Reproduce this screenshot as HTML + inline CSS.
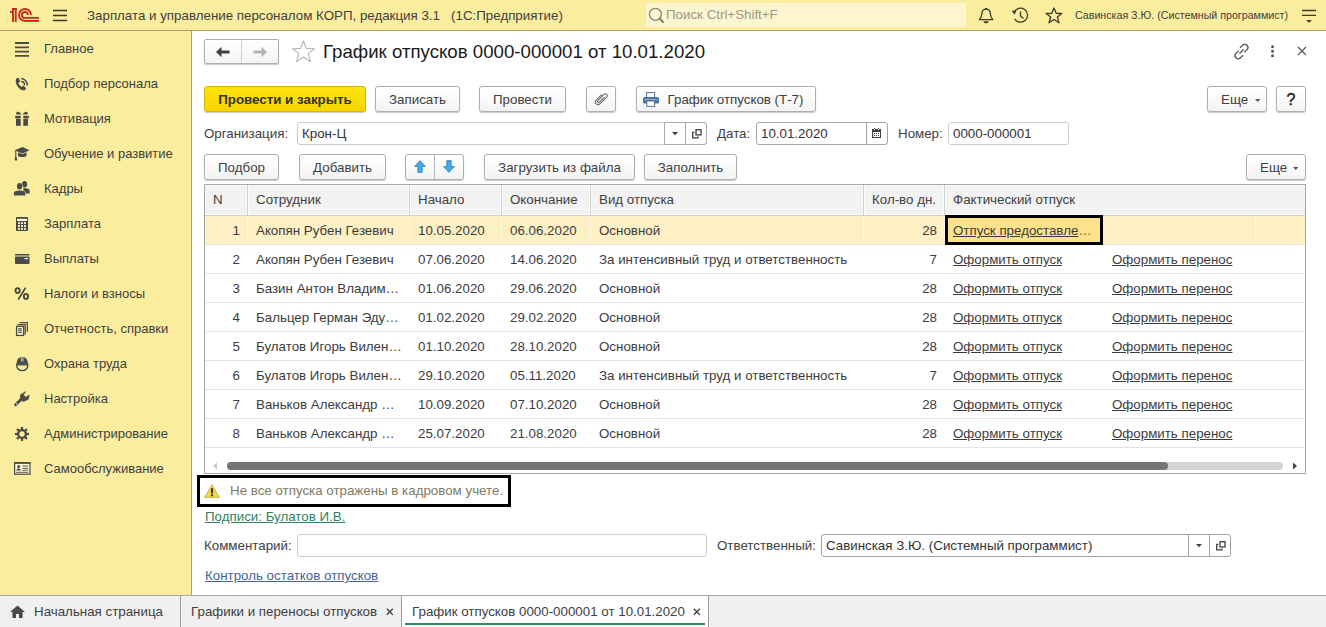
<!DOCTYPE html>
<html><head><meta charset="utf-8">
<style>
*{margin:0;padding:0;box-sizing:border-box}
html,body{width:1326px;height:627px;overflow:hidden;background:#fff}
body{font-family:"Liberation Sans",sans-serif;font-size:13.33px;color:#404040;position:relative}
.a{position:absolute;white-space:nowrap}
svg.a{overflow:visible}
.si{left:44px;color:#404040;font-size:13px}
.btn{position:absolute;height:26px;border:1px solid #aeaeae;border-radius:3px;background:linear-gradient(#ffffff,#f3f3f3);box-shadow:0 1px 1px rgba(0,0,0,.22);text-align:center;line-height:24px;padding-top:1px;color:#404040;white-space:nowrap}
.inp{position:absolute;height:23px;border:1px solid #cbcbcb;border-radius:3px;background:#fff;line-height:21px;padding-left:4px;color:#333;white-space:nowrap}
.th{top:185px;height:30px;line-height:30px;color:#404040}
.td{height:28px;line-height:29px;color:#3c3c3c}
.lnk{text-decoration:underline}
.lbl{color:#404040}

</style></head><body>
<!-- top bar -->
<div class="a" style="left:0;top:0;width:1326px;height:30px;background:#fbed9e"></div>
<div class="a" style="left:0;top:30px;width:1326px;height:1px;background:#ad9f6c"></div>
<!-- sidebar -->
<div class="a" style="left:0;top:31px;width:191px;height:564px;background:#fbed9e"></div>
<div class="a" style="left:191px;top:31px;width:1px;height:564px;background:#ad9f6c"></div>

<!-- 1C logo -->
<svg class="a" style="left:0;top:0" width="44" height="26" viewBox="0 0 44 26">
 <g fill="#c92a1c"><rect x="12" y="8" width="4.7" height="1.7"/><rect x="12" y="8" width="1.9" height="14"/><rect x="14.8" y="8" width="1.9" height="14"/><rect x="10" y="11" width="2.2" height="1.8"/></g>
 <g fill="none" stroke="#c92a1c" stroke-width="1.9">
  <path d="M25 20.95 A6 6 0 1 1 31 14.95"/><path d="M24.5 20.95H39"/>
  <path d="M24.9 17.85 A2.95 2.95 0 1 1 27.85 14.9"/><path d="M24.5 17.85H39"/>
 </g>
</svg>
<!-- hamburger -->
<svg class="a" style="left:53px;top:9px" width="15" height="13"><g stroke="#3d3a2a" stroke-width="1.3"><path d="M0 1.5H14M0 6.5H14M0 11.5H14"/></g></svg>
<div class="a" style="left:87px;top:8px;font-size:13.33px;color:#404040">Зарплата и управление персоналом КОРП, редакция 3.1&nbsp;&nbsp; (1С:Предприятие)</div>
<!-- search -->
<div class="a" style="left:646px;top:3px;width:320px;height:24px;background:#fdf5cf;border-radius:2px"></div>
<svg class="a" style="left:642px;top:4px" width="26" height="24" viewBox="0 0 26 24"><circle cx="13.4" cy="10.3" r="6" fill="none" stroke="#8a8672" stroke-width="1.3"/><path d="M17.6 14.6L21 18" stroke="#8a8672" stroke-width="2.2" stroke-linecap="round"/></svg>
<div class="a" style="left:666px;top:7px;font-size:13.33px;color:#9a9a8a">Поиск Ctrl+Shift+F</div>
<!-- bell -->
<svg class="a" style="left:972px;top:2px" width="26" height="26" viewBox="0 0 26 26"><circle cx="14.1" cy="6.7" r="1" fill="#3d3a2a"/><path d="M7.4 17.6 C9.2 16 9.7 13.8 9.9 11.2 C10.1 8.6 11.8 7.2 14.1 7.2 C16.4 7.2 18.1 8.6 18.3 11.2 C18.5 13.8 19 16 20.8 17.6 Z" fill="none" stroke="#3d3a2a" stroke-width="1.3" stroke-linejoin="round"/><path d="M11.4 19.2 H16.8 C16.2 20.8 15.2 21.3 14.1 21.3 C13 21.3 12 20.8 11.4 19.2Z" fill="#3d3a2a"/></svg>
<!-- history -->
<svg class="a" style="left:1011px;top:7px" width="18" height="17" viewBox="0 0 18 17"><path d="M3.2 5.2 A7 7 0 1 1 3.6 11.8" fill="none" stroke="#3d3a2a" stroke-width="1.3"/><path d="M0.8 3.8 L5.5 3.6 L3.5 7.8Z" fill="#3d3a2a"/><path d="M9.5 4.5V9L12.5 11.5" fill="none" stroke="#3d3a2a" stroke-width="1.3"/></svg>
<!-- star -->
<svg class="a" style="left:1045px;top:7px" width="18" height="17" viewBox="0 0 18 17"><path d="M9 1 L11.2 6.3 L16.8 6.5 L12.4 10 L14 15.8 L9 12.5 L4 15.8 L5.6 10 L1.2 6.5 L6.8 6.3Z" fill="none" stroke="#3d3a2a" stroke-width="1.3" stroke-linejoin="round"/></svg>
<div class="a" style="left:1075px;top:9px;font-size:10.67px;color:#404040">Савинская З.Ю. (Системный программист)</div>
<!-- menu -->
<svg class="a" style="left:1296px;top:4px" width="26" height="24" viewBox="0 0 26 24"><path d="M6 6.5H20M6 11.4H20" stroke="#3d3a2a" stroke-width="1.3"/><path d="M10.2 16.1H15.9L13.05 18.8Z" fill="#3d3a2a"/></svg>

<!-- sidebar items -->
<div class="a si" style="top:41px">Главное</div>
<div class="a si" style="top:76px">Подбор персонала</div>
<div class="a si" style="top:111px">Мотивация</div>
<div class="a si" style="top:146px">Обучение и развитие</div>
<div class="a si" style="top:181px">Кадры</div>
<div class="a si" style="top:216px">Зарплата</div>
<div class="a si" style="top:251px">Выплаты</div>
<div class="a si" style="top:286px">Налоги и взносы</div>
<div class="a si" style="top:321px">Отчетность, справки</div>
<div class="a si" style="top:356px">Охрана труда</div>
<div class="a si" style="top:391px">Настройка</div>
<div class="a si" style="top:426px">Администрирование</div>
<div class="a si" style="top:461px">Самообслуживание</div>

<!-- sidebar icons -->
<svg class="a" style="left:15px;top:42px" width="14" height="15"><g stroke="#4a4a4a" stroke-width="1.8"><path d="M0 1H14M0 5.3H14M0 9.6H14M0 13.9H14"/></g></svg>
<svg class="a" style="left:12px;top:74px" width="20" height="20" viewBox="0 0 20 20"><g fill="#4a4a4a"><path d="M4.2 4.6 L6.6 3.8 L8.2 7.6 L6.4 9 C7 10.6 8.2 12 9.6 13 L11.2 11.6 L14.2 14.2 L12.8 16.2 C11 16.8 8.4 15.8 6.2 13.2 C3.8 10.4 3.2 6.8 4.2 4.6Z"/></g><g fill="none" stroke="#4a4a4a" stroke-width="1.5"><path d="M9.2 4.6 A6.6 6.6 0 0 1 15.4 11.4"/><path d="M9.2 7.6 A3.6 3.6 0 0 1 12.6 11.2"/></g></svg>
<svg class="a" style="left:12px;top:109px" width="20" height="20" viewBox="0 0 20 20"><g fill="#4a4a4a"><path d="M9.3 5.6 C8 2.6 5.8 2.4 4.6 3.2 C3.8 4 4.2 5.6 5.4 5.6Z"/><path d="M10.7 5.6 C12 2.6 14.2 2.4 15.4 3.2 C16.2 4 15.8 5.6 14.6 5.6Z"/><rect x="3.2" y="6.8" width="5.5" height="2.6"/><rect x="11.3" y="6.8" width="5.5" height="2.6"/><rect x="4" y="9.9" width="4.7" height="6.9"/><rect x="11.3" y="9.9" width="4.6" height="6.9"/></g></svg>
<svg class="a" style="left:14px;top:146px" width="16" height="15" viewBox="0 0 16 15"><path d="M0.5 4.3 L8.5 1 L15.5 4.3 L8.5 7.5Z" fill="#4a4a4a"/><path d="M4 6.3 V10 C5.5 11.4 11 11.4 12.5 10 V6.3 L8.5 8.2Z" fill="#4a4a4a"/><path d="M1.8 4.8V12.5" stroke="#4a4a4a" stroke-width="1.1"/><rect x="0.8" y="11.5" width="2.2" height="3" fill="#4a4a4a"/></svg>
<svg class="a" style="left:12px;top:178px" width="20" height="20" viewBox="0 0 20 20"><g fill="#4a4a4a"><ellipse cx="12.6" cy="6.3" rx="2.5" ry="3.2"/><path d="M11 10.6 C11.6 10.4 12.4 10.3 13.4 10.3 C16 10.3 17.6 11.3 17.6 12.9 V15.6 H12Z"/></g><g fill="#4a4a4a" stroke="#fbed9e" stroke-width="1" paint-order="stroke"><ellipse cx="7.6" cy="8.2" rx="2.6" ry="3.3"/><path d="M1.9 17.6 V15.2 C1.9 13.4 3.6 12.6 7.6 12.6 C11.6 12.6 13.3 13.4 13.3 15.2 V17.6Z"/></g></svg>
<svg class="a" style="left:16px;top:217px" width="12" height="14" viewBox="0 0 12 14"><rect x="0" y="0" width="12" height="14" rx="0.8" fill="#4a4a3e"/><rect x="1" y="1.8" width="10" height="2.2" fill="#fdf6dc"/><g fill="#fdf6dc"><rect x="2" y="5.2" width="2" height="1.9"/><rect x="5" y="5.2" width="2" height="1.9"/><rect x="8" y="5.2" width="2" height="1.9"/><rect x="2" y="8.1" width="2" height="1.9"/><rect x="5" y="8.1" width="2" height="1.9"/><rect x="8" y="8.1" width="2" height="1.9"/><rect x="2" y="11" width="2" height="1.8"/><rect x="5" y="11" width="2" height="1.8"/><rect x="8" y="11" width="2" height="1.8"/></g></svg>
<svg class="a" style="left:15px;top:254px" width="15" height="10" viewBox="0 0 15 10"><rect x="0" y="0" width="14.5" height="1.6" rx="0.6" fill="#4a4a4a"/><rect x="0" y="2.6" width="14.5" height="7.4" rx="0.8" fill="#4a4a4a"/><rect x="9.5" y="4" width="3.6" height="1.2" fill="#fdf6dc"/></svg>
<svg class="a" style="left:14px;top:287px" width="16" height="13" viewBox="0 0 16 13"><g fill="none" stroke="#48463c" stroke-width="1.9"><ellipse cx="3.6" cy="3.6" rx="2.1" ry="2.5"/><ellipse cx="12" cy="9.4" rx="2.1" ry="2.5"/></g><path d="M11.6 0.6 L4.2 12.6" stroke="#48463c" stroke-width="1.7"/></svg>
<svg class="a" style="left:10px;top:318px" width="20" height="20" viewBox="0 0 20 20"><g fill="none" stroke="#4a4a3e" stroke-width="1.2"><path d="M9.6 4.6 H17.3 V13.8"/><path d="M7.4 6.6 H15.2 V16.4"/></g><rect x="6.6" y="8.4" width="7" height="9" fill="#fdf6dc" stroke="#4a4a3e" stroke-width="1.3"/><path d="M8.2 10.9H11.8M8.2 12.7H11.8M8.2 14.5H11.8" stroke="#4a4a3e" stroke-width="1.1"/></svg>
<svg class="a" style="left:10px;top:354px" width="20" height="20" viewBox="0 0 20 20"><path d="M6.6 10 C6.6 5.6 8.8 3 12.2 3 C15.6 3 17.9 5.6 17.9 10 Z" fill="#4a4a4a"/><path d="M11.4 3.2V7.6M13 3.2V7.6" stroke="#fdf6dc" stroke-width="0.7"/><path d="M6.6 10.9 H17.9 C17.6 14.6 15.4 16.6 12.2 16.6 C9 16.6 6.9 14.6 6.6 10.9Z" fill="#fbed9e" stroke="#4a4a4a" stroke-width="1.3"/><path d="M6.2 10.1H18.3" stroke="#4a4a4a" stroke-width="1"/></svg>
<svg class="a" style="left:10px;top:388px" width="24" height="24" viewBox="0 0 24 24"><path d="M5.6 16.8 L12.2 10.2" stroke="#4a4a4a" stroke-width="2.9" stroke-linecap="round"/><path d="M10.2 11.6 L10.6 6.6 L15.8 3.6 L13.4 6.8 L15.6 9.2 L19.2 7 L18.4 11.2 L13.6 13.6Z" fill="#4a4a4a" stroke="#4a4a4a" stroke-width="0.6" stroke-linejoin="round"/><circle cx="6.5" cy="15.8" r="0.75" fill="#fdf6dc"/></svg>
<svg class="a" style="left:15px;top:427px" width="14" height="14" viewBox="0 0 14 14"><g fill="#4a4a4a"><rect x="5.9" y="0" width="2.2" height="14"/><rect x="0" y="5.9" width="14" height="2.2"/><rect x="5.9" y="0" width="2.2" height="14" transform="rotate(45 7 7)"/><rect x="5.9" y="0" width="2.2" height="14" transform="rotate(-45 7 7)"/><circle cx="7" cy="7" r="5"/></g><circle cx="7" cy="7" r="2.7" fill="#fbed9e"/></svg>
<svg class="a" style="left:14px;top:462px" width="17" height="13" viewBox="0 0 17 13"><rect x="0.6" y="0.8" width="15.4" height="11.4" fill="#fdf6dc" stroke="#4a4a3e" stroke-width="1.2"/><rect x="0" y="0.2" width="16.6" height="1.6" fill="#4a4a3e"/><circle cx="4.6" cy="4.6" r="1.5" fill="#4a4a3e"/><path d="M2.4 8.6 C2.6 6.8 3.4 6.4 4.6 6.4 C5.8 6.4 6.6 6.8 6.8 8.6Z" fill="#4a4a3e"/><path d="M8.4 4H14.2M8.4 6.3H14.2M8.4 8.2H14.2M2 10.3H14.4" stroke="#4a4a3e" stroke-width="0.9"/></svg>

<!-- dialog header -->
<div class="btn" style="left:204px;top:39px;width:75px;height:25px;border-radius:2px"></div>
<div class="a" style="left:241px;top:40px;width:1px;height:23px;background:#cfcfcf"></div>
<svg class="a" style="left:216px;top:46px" width="14" height="12" viewBox="0 0 14 12"><path d="M0 6 L5.5 0.8 V4.4 H13.5 V7.6 H5.5 V11.2Z" fill="#404040"/></svg>
<svg class="a" style="left:253px;top:46px" width="14" height="12" viewBox="0 0 14 12"><path d="M14 6 L8.5 0.8 V4.4 H0.5 V7.6 H8.5 V11.2Z" fill="#b4b4b4"/></svg>
<svg class="a" style="left:291px;top:40px" width="25" height="23" viewBox="0 0 25 23"><path d="M12.5 1 L15.4 8.4 L23.4 8.7 L17.2 13.6 L19.4 21.6 L12.5 17 L5.6 21.6 L7.8 13.6 L1.6 8.7 L9.6 8.4Z" fill="none" stroke="#b4b4b4" stroke-width="1.1" stroke-linejoin="round"/></svg>
<div class="a" style="left:323px;top:41px;font-size:18.67px;color:#1a1a1a">График отпусков 0000-000001 от 10.01.2020</div>
<svg class="a" style="left:1233px;top:43px" width="17" height="17" viewBox="0 0 17 17"><g fill="none" stroke="#555" stroke-width="1.3"><path d="M7 4.8 L9.6 2.2 C10.8 1 12.8 1 14 2.2 C15.2 3.4 15.2 5.4 14 6.6 L11.4 9.2"/><path d="M5.6 7.8 L3 10.4 C1.8 11.6 1.8 13.6 3 14.8 C4.2 16 6.2 16 7.4 14.8 L10 12.2"/><path d="M6.5 10.5L10.5 6.5"/></g></svg>
<svg class="a" style="left:1270px;top:45px" width="5" height="13"><g fill="#555"><circle cx="2.5" cy="1.8" r="1.5"/><circle cx="2.5" cy="6.3" r="1.5"/><circle cx="2.5" cy="10.8" r="1.5"/></g></svg>
<svg class="a" style="left:1297px;top:46px" width="10" height="10"><path d="M1 1L9 9M9 1L1 9" stroke="#555" stroke-width="1.2"/></svg>

<!-- toolbar -->
<div class="btn" style="left:204px;top:86px;width:162px;background:linear-gradient(#ffe40f,#f6d500);border-color:#d4b800;font-weight:bold;font-size:13.33px;color:#333">Провести и закрыть</div>
<div class="btn" style="left:375px;top:86px;width:85px">Записать</div>
<div class="btn" style="left:479px;top:86px;width:87px">Провести</div>
<div class="btn" style="left:586px;top:86px;width:30px"></div>
<svg class="a" style="left:591px;top:89px" width="20" height="20" viewBox="0 0 20 20"><g transform="rotate(45 10 10)" fill="none" stroke="#6a6a6a" stroke-width="1.05"><path d="M7.3 6 V14.2 A2.7 2.7 0 0 0 12.7 14.2 V4.6 A1.9 1.9 0 0 0 8.9 4.6 V13.4 A1.1 1.1 0 0 0 11.1 13.4 V6.2"/></g></svg>
<div class="btn" style="left:636px;top:86px;width:180px;padding-left:19px">График отпусков (Т-7)</div>
<svg class="a" style="left:643px;top:92px" width="16" height="15" viewBox="0 0 16 15"><rect x="3.6" y="0.6" width="8" height="6" fill="#fff" stroke="#5a6f88" stroke-width="1"/><path d="M1.5 5.5 H14.5 C15.2 5.5 15.5 5.9 15.5 6.6 V11 H0.5 V6.6 C0.5 5.9 0.8 5.5 1.5 5.5Z" fill="#4e78a8" stroke="#3d5f88" stroke-width="0.8"/><rect x="3.8" y="9" width="7.8" height="5.4" fill="#fff" stroke="#5a6f88" stroke-width="1"/><rect x="1.5" y="7.2" width="13" height="0.8" fill="#9fbad8"/></svg>
<div class="btn" style="left:1207px;top:86px;width:60px;text-align:left;padding-left:13px">Еще</div>
<svg class="a" style="left:1255px;top:99px" width="6" height="4"><path d="M0 0H5.5L2.75 3Z" fill="#555"/></svg>
<div class="btn" style="left:1276px;top:86px;width:30px;font-size:16px;line-height:23px;color:#1a1a1a;-webkit-text-stroke:0.4px #1a1a1a">?</div>

<!-- org row -->
<div class="a lbl" style="left:204px;top:126px">Организация:</div>
<div class="inp" style="left:297px;top:122px;width:410px">Крон-Ц</div>
<div class="a" style="left:664px;top:122px;width:43px;height:23px;border:1px solid #ababab;border-radius:0 3px 3px 0"></div>
<div class="a" style="left:685px;top:123px;width:1px;height:21px;background:#ababab"></div>
<svg class="a" style="left:672px;top:132px" width="6" height="4"><path d="M0 0H6L3 3.2Z" fill="#404040"/></svg>
<svg class="a" style="left:692px;top:129px" width="10" height="10" viewBox="0 0 10 10"><rect x="4" y="0.7" width="5" height="5.2" fill="none" stroke="#404040" stroke-width="1.3"/><path d="M2.4 3.3H0.7V8.9H5.9V7.4" fill="none" stroke="#404040" stroke-width="1.3"/></svg>
<div class="a lbl" style="left:717px;top:126px">Дата:</div>
<div class="inp" style="left:756px;top:122px;width:132px;border-color:#a4a4a4">10.01.2020</div>
<div class="a" style="left:866px;top:123px;width:1px;height:21px;background:#a4a4a4"></div>
<svg class="a" style="left:871px;top:127px" width="11" height="12" viewBox="0 0 11 12" shape-rendering="crispEdges"><rect x="1" y="2" width="9" height="9" fill="#404040"/><rect x="2" y="5" width="7" height="5" fill="#fff"/><g fill="#404040"><rect x="3" y="6" width="1" height="1"/><rect x="5" y="6" width="1" height="1"/><rect x="7" y="6" width="1" height="1"/><rect x="3" y="8" width="1" height="1"/><rect x="5" y="8" width="1" height="1"/><rect x="7" y="8" width="1" height="1"/></g><g fill="#fff"><rect x="3" y="2" width="1" height="1"/><rect x="7" y="2" width="1" height="1"/></g><g fill="#404040"><rect x="3" y="1" width="1" height="1"/><rect x="7" y="1" width="1" height="1"/></g></svg>
<div class="a lbl" style="left:898px;top:126px">Номер:</div>
<div class="inp" style="left:948px;top:122px;width:121px">0000-000001</div>

<!-- table toolbar -->
<div class="btn" style="left:204px;top:154px;width:75px">Подбор</div>
<div class="btn" style="left:299px;top:154px;width:87px">Добавить</div>
<div class="btn" style="left:405px;top:154px;width:59px"></div>
<div class="a" style="left:434px;top:155px;width:1px;height:24px;background:#b8b8b8"></div>
<svg class="a" style="left:414px;top:160px" width="12" height="13" viewBox="0 0 12 13"><path d="M6 0.6 L11.4 6.4 H8.2 V12.4 H3.8 V6.4 H0.6Z" fill="#49a9e6" stroke="#2f7fb8" stroke-width="0.8"/></svg>
<svg class="a" style="left:443px;top:160px" width="12" height="13" viewBox="0 0 12 13"><path d="M6 12.4 L11.4 6.6 H8.2 V0.6 H3.8 V6.6 H0.6Z" fill="#49a9e6" stroke="#2f7fb8" stroke-width="0.8"/></svg>
<div class="btn" style="left:484px;top:154px;width:151px">Загрузить из файла</div>
<div class="btn" style="left:644px;top:154px;width:93px">Заполнить</div>
<div class="btn" style="left:1246px;top:154px;width:60px;text-align:left;padding-left:13px">Еще</div>
<svg class="a" style="left:1293px;top:167px" width="6" height="4"><path d="M0 0H5.5L2.75 3Z" fill="#555"/></svg>

<!-- table -->
<div class="a" style="left:204px;top:184px;width:1102px;height:290px;border:1px solid #a6a6a6"></div>
<div class="a" style="left:205px;top:185px;width:1100px;height:30px;background:#f2f2f2"></div>
<div class="a" style="left:205px;top:185px;width:1100px;height:1px;background:#fbfbfb"></div>
<div class="a" style="left:205px;top:214px;width:1100px;height:1px;background:#fbfbfb"></div>
<div class="a" style="left:246px;top:185px;width:3px;height:30px;background:#fbfbfb"></div>
<div class="a" style="left:247px;top:185px;width:1px;height:30px;background:#cfcfcf"></div>
<div class="a" style="left:408px;top:185px;width:3px;height:30px;background:#fbfbfb"></div>
<div class="a" style="left:409px;top:185px;width:1px;height:30px;background:#cfcfcf"></div>
<div class="a" style="left:500px;top:185px;width:3px;height:30px;background:#fbfbfb"></div>
<div class="a" style="left:501px;top:185px;width:1px;height:30px;background:#cfcfcf"></div>
<div class="a" style="left:589px;top:185px;width:3px;height:30px;background:#fbfbfb"></div>
<div class="a" style="left:590px;top:185px;width:1px;height:30px;background:#cfcfcf"></div>
<div class="a" style="left:862px;top:185px;width:3px;height:30px;background:#fbfbfb"></div>
<div class="a" style="left:863px;top:185px;width:1px;height:30px;background:#cfcfcf"></div>
<div class="a" style="left:943px;top:185px;width:3px;height:30px;background:#fbfbfb"></div>
<div class="a" style="left:944px;top:185px;width:1px;height:30px;background:#cfcfcf"></div>
<div class="a" style="left:205px;top:215px;width:1100px;height:1px;background:#cfcfcf"></div>
<div class="a th" style="left:213px">N</div>
<div class="a th" style="left:256px">Сотрудник</div>
<div class="a th" style="left:418px">Начало</div>
<div class="a th" style="left:510px">Окончание</div>
<div class="a th" style="left:599px">Вид отпуска</div>
<div class="a th" style="left:872px">Кол-во дн.</div>
<div class="a th" style="left:953px">Фактический отпуск</div>
<div class="a" style="left:205px;top:216px;width:1100px;height:28px;background:#fdf0c4"></div>
<div class="a" style="left:247px;top:216px;width:1px;height:28px;background:#fff7df"></div>
<div class="a" style="left:409px;top:216px;width:1px;height:28px;background:#fff7df"></div>
<div class="a" style="left:501px;top:216px;width:1px;height:28px;background:#fff7df"></div>
<div class="a" style="left:590px;top:216px;width:1px;height:28px;background:#fff7df"></div>
<div class="a" style="left:863px;top:216px;width:1px;height:28px;background:#fff7df"></div>
<div class="a" style="left:944px;top:216px;width:1px;height:28px;background:#fff7df"></div>
<div class="a" style="left:1255px;top:216px;width:1px;height:28px;background:#fff7df"></div>
<div class="a" style="left:205px;top:244px;width:1100px;height:1px;background:#e4e4e4"></div>
<div class="a td" style="left:205px;width:35px;top:216px;text-align:right">1</div>
<div class="a td" style="left:256px;top:216px">Акопян Рубен Гезевич</div>
<div class="a td" style="left:418px;top:216px">10.05.2020</div>
<div class="a td" style="left:510px;top:216px">06.06.2020</div>
<div class="a td" style="left:599px;top:216px">Основной</div>
<div class="a td" style="left:864px;width:73px;top:216px;text-align:right">28</div>
<div class="a" style="left:945px;top:215px;width:158px;height:30px;border:3px solid #000;background:#fde28c"></div>
<div class="a td" style="left:953px;top:216px"><span class="lnk">Отпуск предоставле</span><span style="color:#6a6a5a">…</span></div>
<div class="a" style="left:205px;top:273px;width:1100px;height:1px;background:#e4e4e4"></div>
<div class="a td" style="left:205px;width:35px;top:245px;text-align:right">2</div>
<div class="a td" style="left:256px;top:245px">Акопян Рубен Гезевич</div>
<div class="a td" style="left:418px;top:245px">07.06.2020</div>
<div class="a td" style="left:510px;top:245px">14.06.2020</div>
<div class="a td" style="left:599px;top:245px">За интенсивный труд и ответственность</div>
<div class="a td" style="left:864px;width:73px;top:245px;text-align:right">7</div>
<div class="a td lnk" style="left:953px;top:245px">Оформить отпуск</div>
<div class="a td lnk" style="left:1112px;top:245px">Оформить перенос</div>
<div class="a" style="left:205px;top:302px;width:1100px;height:1px;background:#e4e4e4"></div>
<div class="a td" style="left:205px;width:35px;top:274px;text-align:right">3</div>
<div class="a td" style="left:256px;top:274px">Базин Антон Владим…</div>
<div class="a td" style="left:418px;top:274px">01.06.2020</div>
<div class="a td" style="left:510px;top:274px">29.06.2020</div>
<div class="a td" style="left:599px;top:274px">Основной</div>
<div class="a td" style="left:864px;width:73px;top:274px;text-align:right">28</div>
<div class="a td lnk" style="left:953px;top:274px">Оформить отпуск</div>
<div class="a td lnk" style="left:1112px;top:274px">Оформить перенос</div>
<div class="a" style="left:205px;top:331px;width:1100px;height:1px;background:#e4e4e4"></div>
<div class="a td" style="left:205px;width:35px;top:303px;text-align:right">4</div>
<div class="a td" style="left:256px;top:303px">Бальцер Герман Эду…</div>
<div class="a td" style="left:418px;top:303px">01.02.2020</div>
<div class="a td" style="left:510px;top:303px">29.02.2020</div>
<div class="a td" style="left:599px;top:303px">Основной</div>
<div class="a td" style="left:864px;width:73px;top:303px;text-align:right">28</div>
<div class="a td lnk" style="left:953px;top:303px">Оформить отпуск</div>
<div class="a td lnk" style="left:1112px;top:303px">Оформить перенос</div>
<div class="a" style="left:205px;top:360px;width:1100px;height:1px;background:#e4e4e4"></div>
<div class="a td" style="left:205px;width:35px;top:332px;text-align:right">5</div>
<div class="a td" style="left:256px;top:332px">Булатов Игорь Вилен…</div>
<div class="a td" style="left:418px;top:332px">01.10.2020</div>
<div class="a td" style="left:510px;top:332px">28.10.2020</div>
<div class="a td" style="left:599px;top:332px">Основной</div>
<div class="a td" style="left:864px;width:73px;top:332px;text-align:right">28</div>
<div class="a td lnk" style="left:953px;top:332px">Оформить отпуск</div>
<div class="a td lnk" style="left:1112px;top:332px">Оформить перенос</div>
<div class="a" style="left:205px;top:389px;width:1100px;height:1px;background:#e4e4e4"></div>
<div class="a td" style="left:205px;width:35px;top:361px;text-align:right">6</div>
<div class="a td" style="left:256px;top:361px">Булатов Игорь Вилен…</div>
<div class="a td" style="left:418px;top:361px">29.10.2020</div>
<div class="a td" style="left:510px;top:361px">05.11.2020</div>
<div class="a td" style="left:599px;top:361px">За интенсивный труд и ответственность</div>
<div class="a td" style="left:864px;width:73px;top:361px;text-align:right">7</div>
<div class="a td lnk" style="left:953px;top:361px">Оформить отпуск</div>
<div class="a td lnk" style="left:1112px;top:361px">Оформить перенос</div>
<div class="a" style="left:205px;top:418px;width:1100px;height:1px;background:#e4e4e4"></div>
<div class="a td" style="left:205px;width:35px;top:390px;text-align:right">7</div>
<div class="a td" style="left:256px;top:390px">Ваньков Александр …</div>
<div class="a td" style="left:418px;top:390px">10.09.2020</div>
<div class="a td" style="left:510px;top:390px">07.10.2020</div>
<div class="a td" style="left:599px;top:390px">Основной</div>
<div class="a td" style="left:864px;width:73px;top:390px;text-align:right">28</div>
<div class="a td lnk" style="left:953px;top:390px">Оформить отпуск</div>
<div class="a td lnk" style="left:1112px;top:390px">Оформить перенос</div>
<div class="a" style="left:205px;top:447px;width:1100px;height:1px;background:#e4e4e4"></div>
<div class="a td" style="left:205px;width:35px;top:419px;text-align:right">8</div>
<div class="a td" style="left:256px;top:419px">Ваньков Александр …</div>
<div class="a td" style="left:418px;top:419px">25.07.2020</div>
<div class="a td" style="left:510px;top:419px">21.08.2020</div>
<div class="a td" style="left:599px;top:419px">Основной</div>
<div class="a td" style="left:864px;width:73px;top:419px;text-align:right">28</div>
<div class="a td lnk" style="left:953px;top:419px">Оформить отпуск</div>
<div class="a td lnk" style="left:1112px;top:419px">Оформить перенос</div>
<div class="a" style="left:227px;top:462px;width:1056px;height:8px;border-radius:4px;background:#d4d4d4"></div>
<div class="a" style="left:227px;top:462px;width:941px;height:8px;border-radius:4px;background:#757575"></div>
<svg class="a" style="left:212px;top:462px" width="6" height="8"><path d="M5 0.5V7.5L1 4Z" fill="#c8c8c8"/></svg>
<svg class="a" style="left:1292px;top:462px" width="6" height="8"><path d="M1 0.5V7.5L5 4Z" fill="#404040"/></svg>

<!-- warning -->
<div class="a" style="left:197px;top:475px;width:314px;height:32px;border:3px solid #000"></div>
<svg class="a" style="left:204px;top:484px" width="17" height="15" viewBox="0 0 17 15"><path d="M8 0.8 L15.4 13.4 H0.6Z" fill="#f0d646" stroke="#c8b040" stroke-width="0.9" stroke-linejoin="round"/><rect x="7" y="4.2" width="2" height="5.2" fill="#333"/><rect x="7" y="10.4" width="2" height="1.8" fill="#333"/></svg>
<div class="a" style="left:230px;top:483px;color:#7f7b62">Не все отпуска отражены в кадровом учете.</div>
<div class="a lnk" style="left:205px;top:509px;color:#2e8060">Подписи: Булатов И.В.</div>
<div class="a lbl" style="left:204px;top:538px">Комментарий:</div>
<div class="inp" style="left:297px;top:534px;width:410px"></div>
<div class="a lbl" style="left:717px;top:538px">Ответственный:</div>
<div class="inp" style="left:821px;top:534px;width:410px;border-color:#a4a4a4">Савинская З.Ю. (Системный программист)</div>
<div class="a" style="left:1188px;top:535px;width:1px;height:21px;background:#a4a4a4"></div>
<div class="a" style="left:1209px;top:535px;width:1px;height:21px;background:#a4a4a4"></div>
<svg class="a" style="left:1196px;top:544px" width="6" height="4"><path d="M0 0H6L3 3.2Z" fill="#404040"/></svg>
<svg class="a" style="left:1216px;top:541px" width="10" height="10" viewBox="0 0 10 10"><rect x="4" y="0.7" width="5" height="5.2" fill="none" stroke="#404040" stroke-width="1.3"/><path d="M2.4 3.3H0.7V8.9H5.9V7.4" fill="none" stroke="#404040" stroke-width="1.3"/></svg>
<div class="a lnk" style="left:205px;top:568px;color:#45649c">Контроль остатков отпусков</div>

<!-- bottom tabs -->
<div class="a" style="left:0;top:595px;width:1326px;height:32px;background:#f0f0f0;border-top:1px solid #a8a8a8"></div>
<div class="a" style="left:180px;top:596px;width:1px;height:31px;background:#9c9c9c"></div>
<div class="a" style="left:401px;top:596px;width:1px;height:31px;background:#9c9c9c"></div>
<div class="a" style="left:708px;top:596px;width:1px;height:31px;background:#9c9c9c"></div>
<div class="a" style="left:402px;top:596px;width:306px;height:31px;background:#fff"></div>
<div class="a" style="left:405px;top:623px;width:300px;height:2px;background:#2e8a57"></div>
<svg class="a" style="left:10px;top:605px" width="15" height="13" viewBox="0 0 15 13"><path d="M7.5 0.5 L15 7 H12.6 V13 H9 V9 H6 V13 H2.4 V7 H0Z" fill="#4a4a4a"/></svg>
<div class="a" style="left:34px;top:604px;font-size:13.33px">Начальная страница</div>
<div class="a" style="left:191px;top:604px;font-size:13.33px">Графики и переносы отпусков</div>
<svg class="a" style="left:386px;top:608px" width="8" height="8"><path d="M0.8 0.8L6.8 6.8M6.8 0.8L0.8 6.8" stroke="#3a3a3a" stroke-width="1.25"/></svg>
<div class="a" style="left:412px;top:604px;font-size:13.33px">График отпусков 0000-000001 от 10.01.2020</div>
<svg class="a" style="left:693px;top:608px" width="8" height="8"><path d="M0.8 0.8L6.8 6.8M6.8 0.8L0.8 6.8" stroke="#3a3a3a" stroke-width="1.25"/></svg>

</body></html>
